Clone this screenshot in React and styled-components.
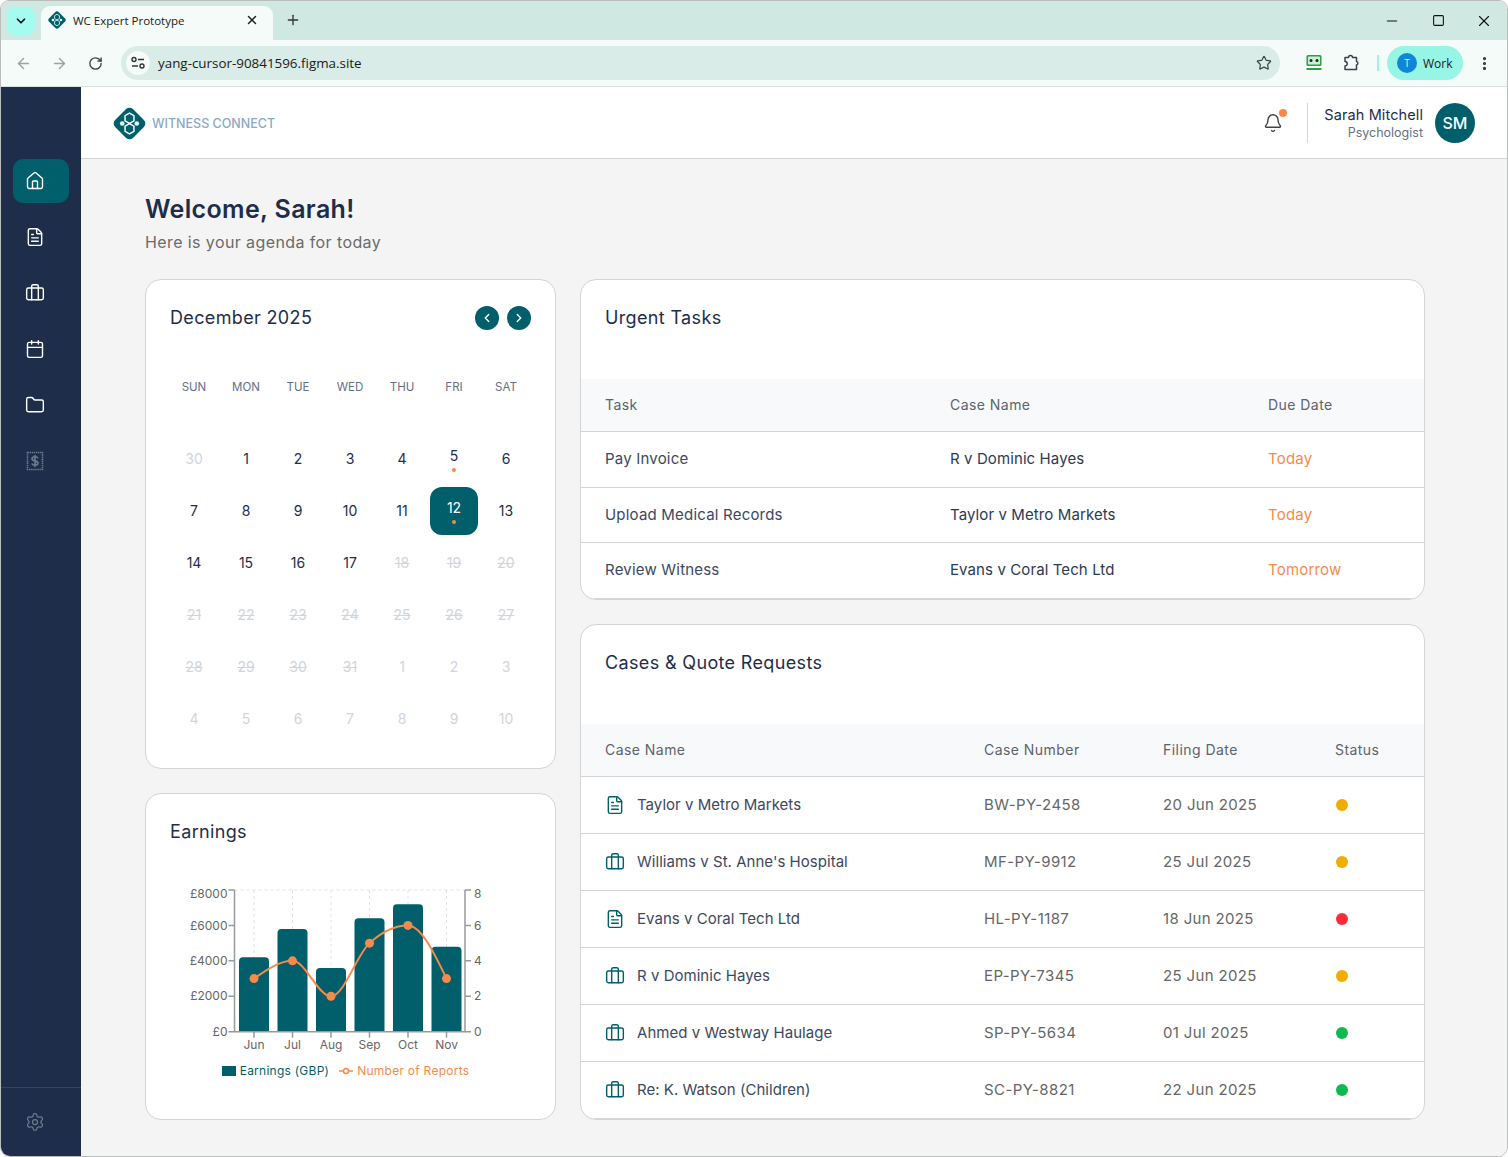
import React from "react";
import styled, { createGlobalStyle } from "styled-components";
import {
  ArrowLeft, ArrowRight, Bell, Briefcase, Calendar, ChevronDown, ChevronLeft, ChevronRight,
  EllipsisVertical, FileText, Folder, House, Minus, Plus, RotateCw, Settings, Square, Star, X,
} from "lucide-react";

const TEAL = "#005f6b";
const NAVY = "#1e2d4a";
const ORANGE = "#f58a4b";
const FONT = `Inter, "Noto Sans", sans-serif`;
const UI_FONT = `"Open Sans", "Noto Sans", sans-serif`;

const Global = createGlobalStyle`
  * { box-sizing: border-box; }
  html, body { margin: 0; padding: 0; background: #fff; }
  body { font-family: ${FONT}; }
`;

const Window = styled.div`
  width: 1508px;
  height: 1157px;
  display: flex;
  flex-direction: column;
  overflow: hidden;
  border: 1px solid #b9bdbc;
  border-radius: 9px 9px 10px 10px;
`;

/* browser chrome */
const TabStrip = styled.div`
  height: 39px;
  flex: none;
  display: flex;
  align-items: flex-end;
  padding-left: 6px;
  background: #cfe8e2;
`;
const TabSearch = styled.div`
  width: 28px;
  height: 28px;
  margin-bottom: 5px;
  display: flex;
  align-items: center;
  justify-content: center;
  border-radius: 8px;
  background: #a4fbef;
  color: #111;
`;
const Tab = styled.div`
  width: 232px;
  height: 34px;
  margin-left: 6px;
  padding: 0 14px 6px 7px;
  display: flex;
  align-items: center;
  gap: 7px;
  border-radius: 9px 9px 0 0;
  background: #f4fbf8;
  font: 11.5px ${UI_FONT};
  color: #222;
`;
const TabTitle = styled.span`
  flex: 1;
`;
const NewTab = styled.div`
  width: 40px;
  height: 34px;
  padding-bottom: 6px;
  display: flex;
  align-items: center;
  justify-content: center;
  color: #333;
`;
const WindowControls = styled.div`
  margin-left: auto;
  height: 39px;
  display: flex;
  align-items: center;
  color: #111;
`;
const WindowButton = styled.div`
  width: 46px;
  height: 39px;
  display: flex;
  align-items: center;
  justify-content: center;
`;
const Toolbar = styled.div`
  height: 47px;
  flex: none;
  display: flex;
  align-items: center;
  padding-left: 4px;
  background: #f4fbf8;
  border-bottom: 1px solid #d6e4e0;
`;
const NavButton = styled.div`
  width: 36px;
  display: flex;
  justify-content: center;
  color: ${(p) => (p.$dim ? "#9ca3a1" : "#3c4643")};
`;
const UrlBar = styled.div`
  width: 1159px;
  height: 34px;
  margin-left: 8px;
  padding: 0 8px 0 5px;
  display: flex;
  align-items: center;
  border-radius: 17px;
  background: #daece7;
  font: 13.4px ${UI_FONT};
  color: #1a1a1a;
`;
const SiteBadge = styled.div`
  width: 24px;
  height: 24px;
  margin-right: 8px;
  display: flex;
  align-items: center;
  justify-content: center;
  border-radius: 50%;
  background: #f4fbf8;
`;
const UrlText = styled.span`
  flex: 1;
`;
const ToolbarIcon = styled.div`
  width: 37px;
  display: flex;
  justify-content: center;
  margin-left: ${(p) => p.$gap || 0}px;
`;
const ToolbarSep = styled.div`
  width: 2px;
  height: 16px;
  margin: 0 8px;
  background: #97f5e6;
`;
const ProfilePill = styled.div`
  width: 76px;
  height: 34px;
  padding-left: 10px;
  display: flex;
  align-items: center;
  gap: 6px;
  border-radius: 17px;
  background: #97f5e6;
  font: 12px ${UI_FONT};
  color: #1a1a1a;
`;
const ProfileAvatar = styled.div`
  width: 20px;
  height: 20px;
  display: flex;
  align-items: center;
  justify-content: center;
  border-radius: 50%;
  background: #0f86d6;
  font-size: 10px;
  color: #d8f0ff;
`;

/* app shell */
const Shell = styled.div`
  flex: 1;
  display: flex;
  min-height: 0;
`;
const Sidebar = styled.aside`
  width: 80px;
  flex: none;
  display: flex;
  flex-direction: column;
  background: ${NAVY};
`;
const SideNav = styled.nav`
  flex: 1;
  display: flex;
  flex-direction: column;
  gap: 12px;
  padding: 72px 12px 0;
`;
const SideItem = styled.div`
  height: 44px;
  display: flex;
  align-items: center;
  padding-left: 12px;
  border-radius: 10px;
  background: ${(p) => (p.$active ? TEAL : "transparent")};
  color: ${(p) => (p.$dim ? "#6f7a8e" : "#fff")};
`;
const SideFoot = styled.div`
  height: 69px;
  padding: 24px 0 0 24px;
  border-top: 1px solid #36445f;
  color: #6f7a8e;
`;
const Content = styled.div`
  flex: 1;
  min-width: 0;
  display: flex;
  flex-direction: column;
  background: #f4f4f4;
`;
const Header = styled.header`
  height: 72px;
  flex: none;
  display: flex;
  align-items: center;
  padding: 0 32px;
  background: #fff;
  border-bottom: 1px solid #d4d4d4;
`;
const Brand = styled.div`
  display: flex;
  align-items: center;
  gap: 6px;
  padding-top: 1px;
  font-size: 12.5px;
  font-weight: 500;
  color: #8aa9c6;
`;
const HeaderRight = styled.div`
  margin-left: auto;
  display: flex;
  align-items: center;
`;
const BellWrap = styled.div`
  position: relative;
  width: 20px;
  height: 20px;
  margin-right: 24px;
  color: #444;
`;
const BellDot = styled.span`
  position: absolute;
  top: -4px;
  right: -4px;
  width: 8px;
  height: 8px;
  border-radius: 50%;
  background: ${ORANGE};
`;
const HeaderSep = styled.div`
  width: 1px;
  height: 40px;
  margin-right: 16px;
  background: #d4d4d4;
`;
const UserInfo = styled.div`
  margin-right: 12px;
  text-align: right;
`;
const UserName = styled.div`
  font-size: 14.5px;
  line-height: 20px;
  letter-spacing: 0.1px;
  color: ${NAVY};
`;
const UserRole = styled.div`
  font-size: 12.5px;
  line-height: 16px;
  color: #667085;
`;
const Avatar = styled.div`
  width: 40px;
  height: 40px;
  display: flex;
  align-items: center;
  justify-content: center;
  border-radius: 50%;
  background: ${TEAL};
  font-size: 16px;
  font-weight: 500;
  color: #fff;
`;
const Main = styled.main`
  flex: 1;
  padding: 34px 0 0 64px;
`;
const Welcome = styled.h1`
  margin: 0;
  font-size: 25px;
  line-height: 32px;
  letter-spacing: 0.35px;
  font-weight: 600;
  color: ${NAVY};
`;
const Agenda = styled.p`
  margin: 5px 0 25px;
  font-size: 16px;
  line-height: 24px;
  letter-spacing: 0.4px;
  color: #6a6a6a;
`;
const Columns = styled.div`
  display: grid;
  grid-template-columns: 411px 845px;
  gap: 24px;
`;
const Column = styled.div`
  display: flex;
  flex-direction: column;
  gap: 24px;
`;
const Card = styled.section`
  overflow: hidden;
  border: 1px solid #d4d4d4;
  border-radius: 16px;
  background: #fff;
  height: ${(p) => p.$h}px;
`;
const CardPad = styled.div`
  padding: 24px;
`;
const CardTitle = styled.h2`
  margin: 0;
  font-size: 18px;
  line-height: 28px;
  letter-spacing: 0.35px;
  font-weight: 400;
  color: ${NAVY};
`;

/* calendar */
const CalHead = styled.div`
  display: flex;
  align-items: center;
  justify-content: space-between;
  margin-bottom: 31px;
`;
const CalNav = styled.div`
  display: flex;
  gap: 8px;
`;
const RoundBtn = styled.div`
  width: 24px;
  height: 24px;
  display: flex;
  align-items: center;
  justify-content: center;
  border-radius: 50%;
  background: ${TEAL};
  color: #fff;
`;
const CalGrid = styled.div`
  display: grid;
  grid-template-columns: repeat(7, 48px);
  grid-auto-rows: 48px;
  gap: 4px;
  margin-top: ${(p) => p.$top || 0}px;
`;
const DayName = styled.div`
  display: flex;
  align-items: center;
  justify-content: center;
  font-size: 11.5px;
  color: #667085;
`;
const Day = styled.div`
  position: relative;
  display: flex;
  align-items: center;
  justify-content: center;
  padding-bottom: ${(p) => (p.$event ? 8 : 2)}px;
  border-radius: 12px;
  font-size: 14px;
  background: ${(p) => (p.$selected ? TEAL : "transparent")};
  color: ${(p) => (p.$selected ? "#fff" : p.$muted ? "#d1d5db" : NAVY)};
  text-decoration: ${(p) => (p.$struck ? "line-through" : "none")};
`;
const EventDot = styled.span`
  position: absolute;
  left: 50%;
  bottom: 11px;
  width: 4px;
  height: 4px;
  margin-left: -2px;
  border-radius: 50%;
  background: ${ORANGE};
`;

/* tables */
const TitleBlock = styled.div`
  height: 99px;
  padding: 24px;
`;
const Table = styled.table`
  width: 100%;
  table-layout: fixed;
  border-collapse: separate;
  border-spacing: 0;
`;
const Th = styled.th`
  height: 53px;
  padding: 0 0 2px 24px;
  text-align: left;
  font-size: 14px;
  letter-spacing: 0.45px;
  font-weight: 400;
  color: #5c6370;
  background: #f8f9fb;
  border-bottom: 1px solid #d4d4d4;
  width: ${(p) => p.$w}px;
`;
const Td = styled.td`
  height: ${(p) => p.$h}px;
  padding: 0 0 ${(p) => (p.$flush ? 0 : 2)}px 24px;
  font-size: 15px;
  letter-spacing: ${(p) => p.$track || 0.1}px;
  color: ${(p) => p.$color || "#3c4860"};
  border-bottom: 1px solid #d4d4d4;
`;
const CaseCell = styled.div`
  display: flex;
  align-items: center;
  gap: 12px;
  color: #3c4860;
  letter-spacing: 0.03px;
  svg { color: ${TEAL}; flex: none; }
`;
const CaseName = styled.span`
  padding-bottom: 2px;
`;
const StatusDot = styled.span`
  display: block;
  width: 12px;
  height: 12px;
  margin-left: 1px;
  border-radius: 50%;
  background: ${(p) => p.$color};
`;

/* earnings chart */
const ChartWrap = styled.div`
  margin-top: 24px;
`;
const Legend = styled.div`
  display: flex;
  justify-content: center;
  align-items: center;
  gap: 10px;
  padding: 3px 10px 0 0;
  font-size: 12px;
  letter-spacing: 0.25px;
`;
const LegendItem = styled.span`
  display: flex;
  align-items: center;
  gap: 4px;
  color: ${(p) => p.$color};
`;
const Swatch = styled.span`
  width: 14px;
  height: 10px;
  background: ${TEAL};
`;

const Logo = ({ size = 33 }) => (
  <svg width={size} height={size} viewBox="0 0 34 34">
    <rect x="4" y="4" width="26" height="26" rx="5" transform="rotate(45 17 17)" fill={TEAL} />
    <g fill="none" stroke="#fff" strokeWidth="1.5">
      <path d="M17 6.2l4.6 2.7v5.3L17 16.8l-4.6-2.6V8.900z" />
      <path d="M17 17.200l4.600 2.600v5.300L17 27.800l-4.600-2.700v-5.300z" />
    </g>
    <circle cx="9.500" cy="17" r="2.400" fill="#dff" />
    <circle cx="24.500" cy="17" r="2.400" fill="#dff" />
  </svg>
);

const TuneIcon = () => (
  <svg width="16" height="16" viewBox="0 0 16 16" fill="none" stroke="#333" strokeWidth="1.4">
    <circle cx="4" cy="4.500" r="2" />
    <path d="M8 4.500h6M2 11h6" />
    <circle cx="12" cy="11" r="2" />
  </svg>
);

const PasswordIcon = () => (
  <svg width="18" height="18" viewBox="0 0 18 18">
    <rect x="1.500" y="1" width="15" height="11" rx="1.500" fill="#2f9e44" />
    <rect x="3" y="2.500" width="12" height="8" rx="1" fill="#cfeeda" />
    <circle cx="6" cy="6.500" r="1.500" fill="#1c2a24" />
    <circle cx="12" cy="6.500" r="1.500" fill="#1c2a24" />
    <rect x="1.500" y="14" width="15" height="2" fill="#2f9e44" />
  </svg>
);

const ExtensionIcon = () => (
  <svg width="18" height="18" viewBox="0 0 18 18" fill="none" stroke="#36454a" strokeWidth="1.500" strokeLinejoin="round">
    <path d="M3 3.500h3.500a2 2 0 0 1 4 0H14.500v4a1.800 1.800 0 0 1 0 3.500v4.500H3v-3.500a2.200 2.200 0 0 0 0-4.500z" />
  </svg>
);

const BillIcon = () => (
  <svg width="20" height="20" viewBox="0 0 20 20" fill="none" stroke="currentColor">
    <rect x="2.500" y="1.500" width="15" height="17" strokeWidth="1.600" strokeDasharray="1.400 0.700" />
    <path d="M13 7.200c-.4-1-1.500-1.500-3-1.500-1.700 0-3 .7-3 2 0 2.800 6 1.500 6 4.400 0 1.300-1.300 2.100-3 2.100-1.600 0-2.700-.6-3.100-1.700M10 4v12" strokeWidth="1.600" />
  </svg>
);

const MONTHS = [
  { m: "Jun", earn: 4200, reports: 3 },
  { m: "Jul", earn: 5800, reports: 4 },
  { m: "Aug", earn: 3600, reports: 2 },
  { m: "Sep", earn: 6400, reports: 5 },
  { m: "Oct", earn: 7200, reports: 6 },
  { m: "Nov", earn: 4800, reports: 3 },
];

const AXIS_LEFT = 64.5;
const AXIS_RIGHT = 295;
const AXIS_TOP = 20;
const AXIS_BOTTOM = 161.7;
const STEP = 38.5;
const reportY = (v) => AXIS_BOTTOM - (v * (AXIS_BOTTOM - AXIS_TOP)) / 8;
const earnH = (v) => (v * (AXIS_BOTTOM - AXIS_TOP)) / 8000;
const centerX = (i) => 84 + STEP * i;

// same shape as a monotone-x curve
const monotonePath = (pts) => {
  const sec = pts.slice(1).map((p, i) => (p[1] - pts[i][1]) / (p[0] - pts[i][0]));
  const m = pts.map((_, i) => {
    if (i === 0 || i === pts.length - 1) return null;
    const a = sec[i - 1];
    const b = sec[i];
    if (a * b <= 0) return 0;
    return Math.sign(a) * Math.min(Math.abs(a), Math.abs(b), Math.abs((a + b) / 2) / 2) * 2;
  });
  m[0] = (3 * sec[0] - m[1]) / 2;
  m[m.length - 1] = (3 * sec[sec.length - 1] - m[m.length - 2]) / 2;
  let d = `M${pts[0][0]},${pts[0][1]}`;
  for (let i = 0; i < pts.length - 1; i++) {
    const h = (pts[i + 1][0] - pts[i][0]) / 3;
    d += `C${pts[i][0] + h},${pts[i][1] + h * m[i]} ${pts[i + 1][0] - h},${pts[i + 1][1] - h * m[i + 1]} ${pts[i + 1][0]},${pts[i + 1][1]}`;
  }
  return d;
};

const EarningsChart = () => {
  const pts = MONTHS.map((d, i) => [centerX(i), reportY(d.reports)]);
  const labelStyle = { fontFamily: FONT, fontSize: 12, fill: "#666" };
  return (
    <svg width="361" height="190" viewBox="0 0 361 190" style={{ display: "block" }}>
      <path d={`M${AXIS_LEFT} ${AXIS_TOP}H${AXIS_RIGHT}`} stroke="#e2e2e2" strokeDasharray="3 3" />
      {MONTHS.map((d, i) => (
        <path key={d.m} d={`M${centerX(i)} ${AXIS_TOP}V${AXIS_BOTTOM}`} stroke="#e2e2e2" strokeDasharray="3 3" />
      ))}
      {MONTHS.map((d, i) => {
        const h = earnH(d.earn);
        const x = 69 + STEP * i;
        return (
          <path
            key={d.m}
            d={`M${x} ${AXIS_BOTTOM}v${-(h - 4)}a4 4 0 0 1 4 -4h22a4 4 0 0 1 4 4v${h - 4}z`}
            fill={TEAL}
          />
        );
      })}
      <g stroke="#999" strokeWidth="1.500" fill="none">
        <path d={`M${AXIS_LEFT} ${AXIS_TOP}V${AXIS_BOTTOM}H${AXIS_RIGHT}V${AXIS_TOP}`} />
        {[0, 1, 2, 3, 4].map((t) => {
          const y = reportY(t * 2);
          return <path key={t} d={`M${AXIS_LEFT - 6} ${y}H${AXIS_LEFT}M${AXIS_RIGHT} ${y}H${AXIS_RIGHT + 6}`} />;
        })}
        {MONTHS.map((d, i) => (
          <path key={d.m} d={`M${centerX(i)} ${AXIS_BOTTOM}v6`} />
        ))}
      </g>
      {[0, 1, 2, 3, 4].map((t) => {
        const y = reportY(t * 2) + (t === 4 ? 3.500 : 0) + 4.200;
        return (
          <g key={t} style={labelStyle}>
            <text x={AXIS_LEFT - 7} y={y} textAnchor="end">{`£${t * 2000}`}</text>
            <text x={AXIS_RIGHT + 9} y={y}>{t * 2}</text>
          </g>
        );
      })}
      {MONTHS.map((d, i) => (
        <text key={d.m} x={centerX(i)} y={179} textAnchor="middle" style={labelStyle}>{d.m}</text>
      ))}
      <path d={monotonePath(pts)} fill="none" stroke={ORANGE} strokeWidth="2" />
      {pts.map((p) => (
        <circle key={p[0]} cx={p[0]} cy={p[1]} r="4.500" fill={ORANGE} />
      ))}
    </svg>
  );
};

const CALENDAR = [
  [["30", "m"], "1", "2", "3", "4", ["5", "e"], "6"],
  ["7", "8", "9", "10", "11", ["12", "s"], "13"],
  ["14", "15", "16", "17", ["18", "x"], ["19", "x"], ["20", "x"]],
  ["21", "22", "23", "24", "25", "26", "27"].map((d) => [d, "x"]),
  [["28", "x"], ["29", "x"], ["30", "x"], ["31", "x"], ["1", "m"], ["2", "m"], ["3", "m"]],
  ["4", "5", "6", "7", "8", "9", "10"].map((d) => [d, "m"]),
];

const URGENT = [
  { task: "Pay Invoice", name: "R v Dominic Hayes", due: "Today", h: 56 },
  { task: "Upload Medical Records", name: "Taylor v Metro Markets", due: "Today", h: 55 },
  { task: "Review Witness", name: "Evans v Coral Tech Ltd", due: "Tomorrow", h: 56 },
];

const AMBER = "#f0ad00";
const RED = "#fb2c3a";
const GREEN = "#10b94e";

const CASES = [
  { icon: FileText, name: "Taylor v Metro Markets", no: "BW-PY-2458", date: "20 Jun 2025", status: AMBER },
  { icon: Briefcase, name: "Williams v St. Anne's Hospital", no: "MF-PY-9912", date: "25 Jul 2025", status: AMBER },
  { icon: FileText, name: "Evans v Coral Tech Ltd", no: "HL-PY-1187", date: "18 Jun 2025", status: RED },
  { icon: Briefcase, name: "R v Dominic Hayes", no: "EP-PY-7345", date: "25 Jun 2025", status: AMBER },
  { icon: Briefcase, name: "Ahmed v Westway Haulage", no: "SP-PY-5634", date: "01 Jul 2025", status: GREEN },
  { icon: Briefcase, name: "Re: K. Watson (Children)", no: "SC-PY-8821", date: "22 Jun 2025", status: GREEN },
];

const CalDay = ({ value }) => {
  const [label, kind] = Array.isArray(value) ? value : [value];
  const event = kind === "e" || kind === "s";
  return (
    <Day $event={event} $selected={kind === "s"} $muted={kind === "m" || kind === "x"} $struck={kind === "x"}>
      {label}
      {event && <EventDot />}
    </Day>
  );
};

const App = () => (
  <Window>
    <Global />
    <TabStrip>
      <TabSearch><ChevronDown size={14} strokeWidth={3} /></TabSearch>
      <Tab>
        <Logo size={18} />
        <TabTitle>WC Expert Prototype</TabTitle>
        <X size={14} strokeWidth={2.5} />
      </Tab>
      <NewTab><Plus size={16} strokeWidth={2} /></NewTab>
      <WindowControls>
        <WindowButton><Minus size={16} strokeWidth={1.6} /></WindowButton>
        <WindowButton><Square size={13} strokeWidth={2} /></WindowButton>
        <WindowButton><X size={18} strokeWidth={1.5} /></WindowButton>
      </WindowControls>
    </TabStrip>
    <Toolbar>
      <NavButton $dim><ArrowLeft size={17} /></NavButton>
      <NavButton $dim><ArrowRight size={17} /></NavButton>
      <NavButton><RotateCw size={15} strokeWidth={2.2} /></NavButton>
      <UrlBar>
        <SiteBadge><TuneIcon /></SiteBadge>
        <UrlText>yang-cursor-90841596.figma.site</UrlText>
        <Star size={16} color="#3c4643" strokeWidth={1.8} />
      </UrlBar>
      <ToolbarIcon $gap={15}><PasswordIcon /></ToolbarIcon>
      <ToolbarIcon><ExtensionIcon /></ToolbarIcon>
      <ToolbarSep />
      <ProfilePill>
        <ProfileAvatar>T</ProfileAvatar>
        Work
      </ProfilePill>
      <ToolbarIcon $gap={3}><EllipsisVertical size={17} color="#333" strokeWidth={2.5} /></ToolbarIcon>
    </Toolbar>
    <Shell>
      <Sidebar>
        <SideNav>
          <SideItem $active><House size={20} strokeWidth={1.7} /></SideItem>
          <SideItem><FileText size={20} strokeWidth={1.7} /></SideItem>
          <SideItem><Briefcase size={20} strokeWidth={1.7} /></SideItem>
          <SideItem><Calendar size={20} strokeWidth={1.7} /></SideItem>
          <SideItem><Folder size={20} strokeWidth={1.7} /></SideItem>
          <SideItem $dim><BillIcon /></SideItem>
        </SideNav>
        <SideFoot><Settings size={20} strokeWidth={1.5} /></SideFoot>
      </Sidebar>
      <Content>
        <Header>
          <Brand>
            <Logo />
            WITNESS CONNECT
          </Brand>
          <HeaderRight>
            <BellWrap>
              <Bell size={20} strokeWidth={1.7} />
              <BellDot />
            </BellWrap>
            <HeaderSep />
            <UserInfo>
              <UserName>Sarah Mitchell</UserName>
              <UserRole>Psychologist</UserRole>
            </UserInfo>
            <Avatar>SM</Avatar>
          </HeaderRight>
        </Header>
        <Main>
          <Welcome>Welcome, Sarah!</Welcome>
          <Agenda>Here is your agenda for today</Agenda>
          <Columns>
            <Column>
              <Card $h={490}>
                <CardPad>
                  <CalHead>
                    <CardTitle>December 2025</CardTitle>
                    <CalNav>
                      <RoundBtn><ChevronLeft size={14} strokeWidth={2.5} /></RoundBtn>
                      <RoundBtn><ChevronRight size={14} strokeWidth={2.5} /></RoundBtn>
                    </CalNav>
                  </CalHead>
                  <CalGrid>
                    {["SUN", "MON", "TUE", "WED", "THU", "FRI", "SAT"].map((d) => (
                      <DayName key={d}>{d}</DayName>
                    ))}
                  </CalGrid>
                  <CalGrid $top={24}>
                    {CALENDAR.flat().map((d, i) => (
                      <CalDay key={i} value={d} />
                    ))}
                  </CalGrid>
                </CardPad>
              </Card>
              <Card $h={327}>
                <CardPad>
                  <CardTitle>Earnings</CardTitle>
                  <ChartWrap>
                    <EarningsChart />
                    <Legend>
                      <LegendItem $color={TEAL}><Swatch />Earnings (GBP)</LegendItem>
                      <LegendItem $color={ORANGE}>
                        <svg width="14" height="10" viewBox="0 0 14 10">
                          <path d="M0 5h14" stroke={ORANGE} strokeWidth="1.500" />
                          <circle cx="7" cy="5" r="2.500" fill="#fff" stroke={ORANGE} strokeWidth="1.500" />
                        </svg>
                        Number of Reports
                      </LegendItem>
                    </Legend>
                  </ChartWrap>
                </CardPad>
              </Card>
            </Column>
            <Column>
              <Card $h={321}>
                <TitleBlock><CardTitle>Urgent Tasks</CardTitle></TitleBlock>
                <Table>
                  <thead>
                    <tr>
                      <Th $w={345}>Task</Th>
                      <Th $w={318}>Case Name</Th>
                      <Th>Due Date</Th>
                    </tr>
                  </thead>
                  <tbody>
                    {URGENT.map(({ task, name, due, h }) => (
                      <tr key={task}>
                        <Td $h={h} $track={0.2}>{task}</Td>
                        <Td $h={h} $color="#2c3a55">{name}</Td>
                        <Td $h={h} $color={ORANGE} $track={0.2}>{due}</Td>
                      </tr>
                    ))}
                  </tbody>
                </Table>
              </Card>
              <Card $h={496}>
                <TitleBlock><CardTitle>Cases &amp; Quote Requests</CardTitle></TitleBlock>
                <Table>
                  <thead>
                    <tr>
                      <Th $w={379}>Case Name</Th>
                      <Th $w={179}>Case Number</Th>
                      <Th $w={172}>Filing Date</Th>
                      <Th>Status</Th>
                    </tr>
                  </thead>
                  <tbody>
                    {CASES.map(({ icon: Icon, name, no, date, status }) => (
                      <tr key={no}>
                        <Td $h={57} $flush>
                          <CaseCell>
                            <Icon size={20} strokeWidth={1.7} />
                            <CaseName>{name}</CaseName>
                          </CaseCell>
                        </Td>
                        <Td $h={57} $color="#666" $track={0.4}>{no}</Td>
                        <Td $h={57} $color="#666" $track={0.35}>{date}</Td>
                        <Td $h={57} $flush><StatusDot $color={status} /></Td>
                      </tr>
                    ))}
                  </tbody>
                </Table>
              </Card>
            </Column>
          </Columns>
        </Main>
      </Content>
    </Shell>
  </Window>
);

export default App;
